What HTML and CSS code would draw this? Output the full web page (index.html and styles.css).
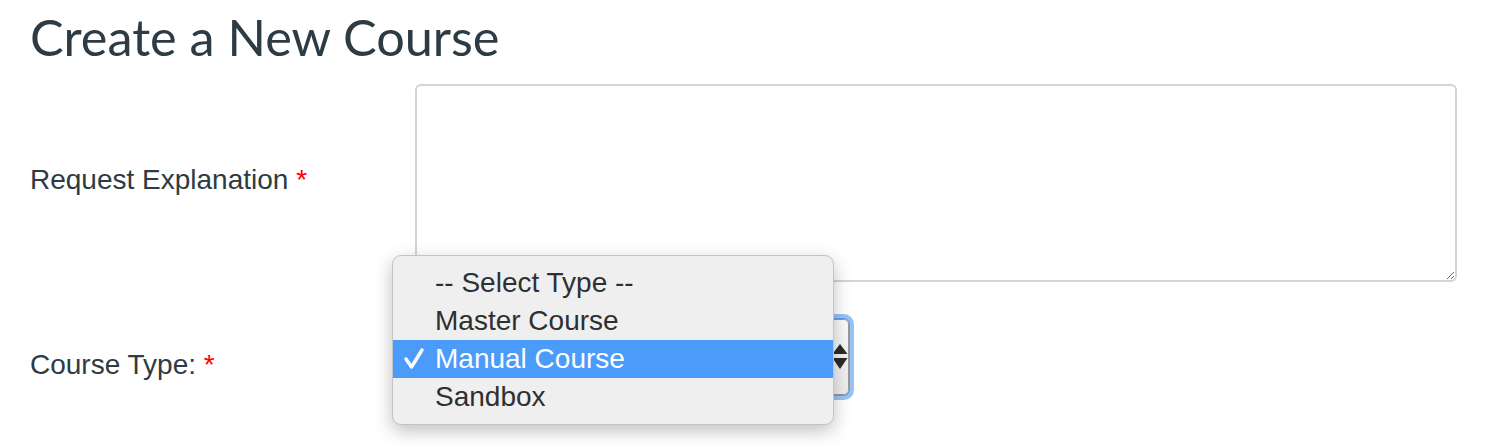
FILE: index.html
```html
<!DOCTYPE html>
<html lang="en">
<head>
<meta charset="utf-8">
<title>Create a New Course</title>
<link rel="stylesheet" href="styles.css">
</head>
<body>
<div class="page">
  <h1 class="title">Create a New Course</h1>
  <form class="form">
    <div class="row row-explain">
      <label class="label label-explain" for="explain">Request Explanation <span class="req">*</span></label>
      <textarea class="textarea" id="explain"></textarea>
    </div>
    <div class="row row-type">
      <label class="label label-type">Course Type: <span class="req">*</span></label>
      <div class="select">
        <span class="select-value">Manual Course</span>
        <svg class="select-arrows" width="16" height="26" viewBox="0 0 16 26">
          <polygon points="8,0 15.5,10 0.5,10" fill="#2b2b2b"/>
          <polygon points="0.5,14 15.5,14 8,25" fill="#2b2b2b"/>
        </svg>
      </div>
    </div>
  </form>
  <ul class="menu">
    <li class="menu-item">-- Select Type --</li>
    <li class="menu-item">Master Course</li>
    <li class="menu-item is-selected">
      <svg class="check" width="22" height="24" viewBox="0 0 22 24"><polyline points="3,12 8.5,20 19,3" fill="none" stroke="#fff" stroke-width="3.4" stroke-linecap="round" stroke-linejoin="round"/></svg>
      Manual Course
    </li>
    <li class="menu-item">Sandbox</li>
  </ul>
</div>
</body>
</html>
```
FILE: styles.css
```css
html, body {
  margin: 0;
  padding: 0;
  background: #ffffff;
}

.page {
  position: relative;
  padding: 0 35px 0 30px;
  width: 1492px;
  height: 446px;
  box-sizing: border-box;
  overflow: hidden;
}

.title {
  margin: 0;
  padding-top: 6px;
  font-family: Lato, "Liberation Sans", sans-serif;
  font-weight: 400;
  font-size: 50.4px;
  line-height: 62px;
  color: #2d3b45;
}

.form {
  margin-top: 16px;
  display: flex;
  flex-direction: column;
  gap: 37px;
}

.row {
  display: grid;
  grid-template-columns: 385px 1fr;
}

.row-explain {
  align-items: center;
}

.label {
  font-family: "Liberation Sans", Arial, sans-serif;
  font-size: 28px;
  color: #2d3b45;
}

.label-explain {
  margin-bottom: 6px;
}

.label-type {
  padding-top: 30px;
}

.req {
  color: #ff0000;
}

.textarea {
  display: block;
  width: 100%;
  height: 198px;
  box-sizing: border-box;
  border: 2px solid #cfd5da;
  border-radius: 6px;
  background: #fff;
  resize: both;
  margin: 0;
  padding: 8px;
}

.select {
  width: 434px;
  height: 76px;
  box-sizing: border-box;
  border: 1.5px solid #9a9a9a;
  border-radius: 5px;
  background: linear-gradient(#fbfbfb, #ececec);
  box-shadow: 0 0 0 1px rgba(90, 155, 240, 0.9), 0 0 0 5px rgba(110, 170, 245, 0.7);
  display: flex;
  align-items: center;
  justify-content: space-between;
  padding: 0 0 0 20px;
  font-family: "Liberation Sans", Arial, sans-serif;
  font-size: 28px;
  color: #333;
}

.menu {
  position: absolute;
  left: 392px;
  top: 255px;
  width: 442px;
  margin: 0;
  padding: 8px 0;
  list-style: none;
  box-sizing: border-box;
  background: #efefef;
  border: 1px solid #c4c4c4;
  border-radius: 9px;
  box-shadow: 0 6px 18px rgba(0, 0, 0, 0.25);
  font-family: "Liberation Sans", Arial, sans-serif;
  font-size: 28px;
  color: #2f2f2f;
}

.menu-item {
  height: 38px;
  line-height: 38px;
  padding-left: 42px;
  position: relative;
}

.menu-item.is-selected {
  background: #4b9bfa;
  color: #ffffff;
}

.check {
  position: absolute;
  left: 10px;
  top: 7px;
}
```
